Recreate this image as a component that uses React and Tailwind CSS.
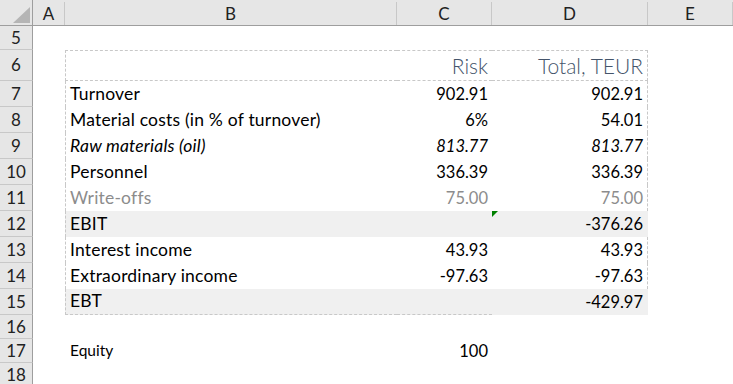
import React from 'react';

const cols = [
    { key: 'A', w: 'w-[32px]' },
    { key: 'B', w: 'w-[332px]' },
    { key: 'C', w: 'w-[95px]' },
    { key: 'D', w: 'w-[156px]' },
    { key: 'E', w: 'w-[85px]' },
];

const body = [
    { n: 7, label: 'Turnover', c: '902.91', d: '902.91' },
    { n: 8, label: 'Material costs (in % of turnover)', c: '6%', d: '54.01' },
    { n: 9, label: 'Raw materials (oil)', c: '813.77', d: '813.77', italic: true },
    { n: 10, label: 'Personnel', c: '336.39', d: '336.39' },
    { n: 11, label: 'Write-offs', c: '75.00', d: '75.00', muted: true },
    { n: 12, label: 'EBIT', c: '', d: '-376.26', shaded: true, flag: true },
    { n: 13, label: 'Interest income', c: '43.93', d: '43.93' },
    { n: 14, label: 'Extraordinary income', c: '-97.63', d: '-97.63' },
    { n: 15, label: 'EBT', c: '', d: '-429.97', shaded: true, last: true },
];

function RowHead({ n, h }) {
    return (
        <div className={`${h} w-[33px] shrink-0 bg-[#e6e6e6] border-r border-b border-r-[#9e9e9e] border-b-[#c8c8c8] flex items-center justify-center text-[17px] text-[#222]`}>
            {n}
        </div>
    );
}

export default function App() {
    return (
        <div className="w-[733px] h-[384px] overflow-hidden bg-white font-['Lato',sans-serif] text-black">
            {/* column headers */}
            <div className="flex h-[26px] bg-[#e6e6e6] border-b border-[#9e9e9e]">
                <div className="w-[33px] shrink-0 border-r border-[#9e9e9e] relative">
                    <svg className="absolute left-[13px] top-[7px]" width="17" height="16" viewBox="0 0 17 16">
                        <polygon points="17,0 17,16 0,16" fill="#b5b5b5" />
                    </svg>
                </div>
                {cols.map((c) => (
                    <div key={c.key} className={`${c.w} shrink-0 flex items-center justify-center text-[17px] text-[#222] border-r border-[#c8c8c8] mt-[2px]`}>
                        {c.key}
                    </div>
                ))}
            </div>

            {/* row 5 */}
            <div className="flex">
                <RowHead n={5} h="h-[24px]" />
            </div>

            {/* row 6: table heading */}
            <div className="flex h-[31px]">
                <RowHead n={6} h="h-[31px]" />
                <div className="w-[32px] shrink-0" />
                <div className="w-[332px] shrink-0 border-l border-t border-b border-dashed border-[#c8c8c8]" />
                <div className="w-[95px] shrink-0 border-t border-b border-dashed border-[#c8c8c8] flex items-end justify-end pr-[4px] text-[21px] font-light text-[#44546a] leading-none">
                    <span className="pb-[4px]">Risk</span>
                </div>
                <div className="w-[156px] shrink-0 border-t border-b border-r border-dashed border-[#c8c8c8] flex items-end justify-end pr-[4px] text-[21px] font-light text-[#44546a] leading-none">
                    <span className="pb-[4px]">Total, TEUR</span>
                </div>
            </div>

            {/* rows 7-15 */}
            {body.map((r) => (
                <div key={r.n} className="flex h-[26px]">
                    <RowHead n={r.n} h="h-[26px]" />
                    <div className="w-[32px] shrink-0" />
                    <div
                        className={`flex text-[16.5px] ${r.shaded ? 'bg-[#f0f0f0]' : ''} ${r.italic ? 'italic' : ''} ${r.muted ? 'text-[#8c8c8c]' : ''}`}
                    >
                        <div className={`w-[332px] shrink-0 border-l border-dashed border-[#c8c8c8] ${r.last ? 'border-b' : ''} flex items-center pl-[4px] text-[17.5px] tracking-[0.2px]`}>
                            {r.label}
                        </div>
                        <div className={`w-[95px] shrink-0 border-dashed border-[#c8c8c8] ${r.last ? 'border-b' : ''} flex items-center justify-end pr-[4px]`}>
                            {r.c}
                        </div>
                        <div className={`w-[156px] shrink-0 relative border-dashed ${r.shaded ? 'border-r border-transparent' : 'border-r border-[#c8c8c8]'} flex items-center justify-end pr-[4px]`}>
                            {r.flag && (
                                <svg className="absolute left-0 top-0" width="6" height="6" viewBox="0 0 6 6">
                                    <polygon points="0,0 6,0 0,6" fill="#008000" />
                                </svg>
                            )}
                            {r.d}
                        </div>
                    </div>
                </div>
            ))}

            {/* rows 16-18 */}
            <div className="flex h-[24px]">
                <RowHead n={16} h="h-[24px]" />
            </div>
            <div className="flex h-[24px] text-[15.5px]">
                <RowHead n={17} h="h-[24px]" />
                <div className="w-[32px] shrink-0" />
                <div className="w-[332px] shrink-0 flex items-center pl-[5px]">Equity</div>
                <div className="w-[95px] shrink-0 flex items-center justify-end pr-[4px] text-[16.5px]">100</div>
            </div>
            <div className="flex h-[24px]">
                <RowHead n={18} h="h-[24px]" />
            </div>
        </div>
    );
}
